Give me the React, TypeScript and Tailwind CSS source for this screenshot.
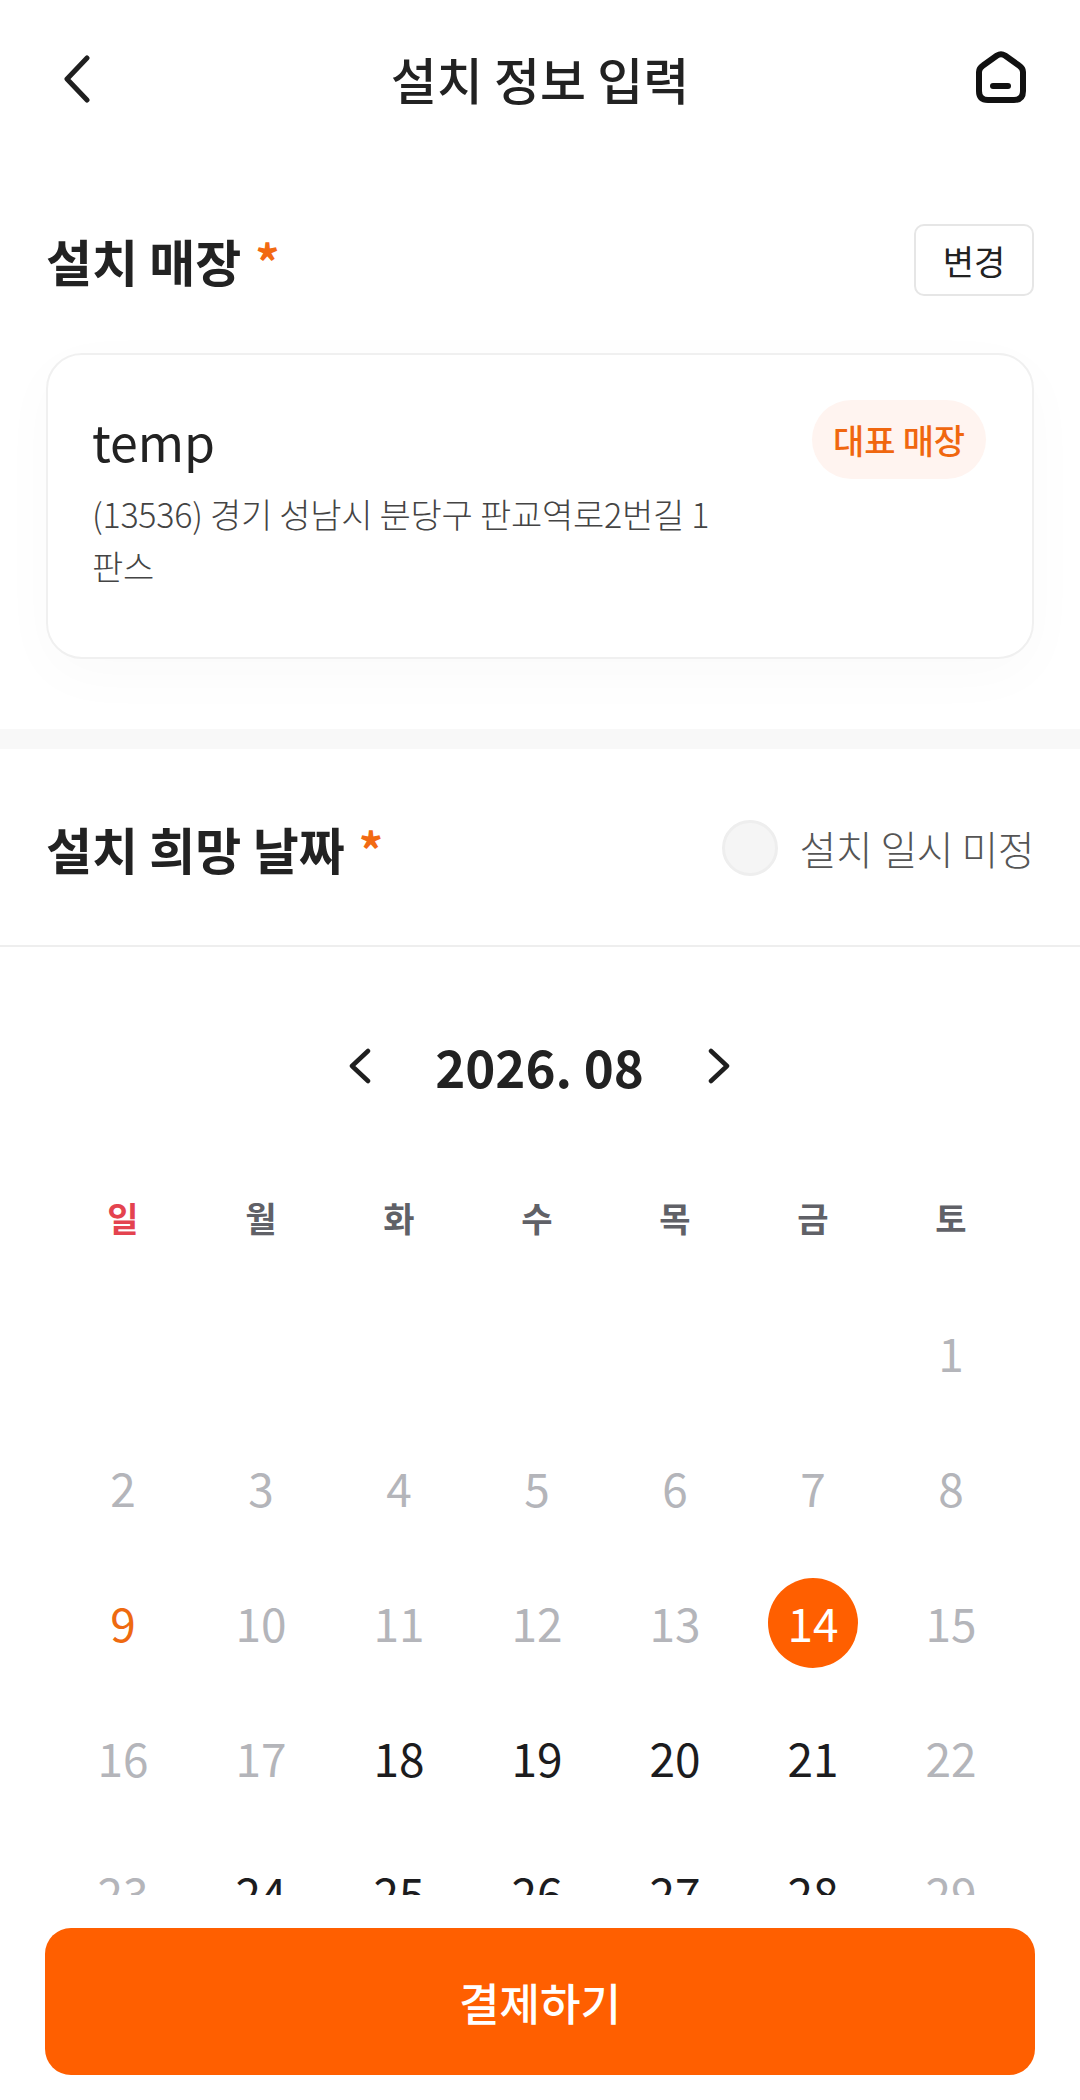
const font = "font-['Noto_Sans_CJK_KR','Noto_Sans',sans-serif]";

const weekdays = ['일', '월', '화', '수', '목', '금', '토'];

// blank cells first, then the days of August 2026
const days: (number | null)[] = [
  null, null, null, null, null, null, 1,
  2, 3, 4, 5, 6, 7, 8,
  9, 10, 11, 12, 13, 14, 15,
  16, 17, 18, 19, 20, 21, 22,
  23, 24, 25, 26, 27, 28, 29,
];

const enabled = [18, 19, 20, 21, 24, 25, 26, 27, 28];

function BackIcon() {
  return (
    <svg viewBox="0 0 26 48" width="26" height="48" fill="none">
      <path d="M23 3 L3 24 L23 45" stroke="#1f1f1f" strokeWidth="5" strokeLinecap="round" strokeLinejoin="round" />
    </svg>
  );
}

function MonthArrow({ dir }: { dir: 'left' | 'right' }) {
  return (
    <svg viewBox="0 0 22 36" width="22" height="36" fill="none">
      <path
        d={dir === 'left' ? 'M19 3 L3 18 L19 33' : 'M3 3 L19 18 L3 33'}
        stroke="#1f1f1f"
        strokeWidth="4.5"
        strokeLinecap="round"
        strokeLinejoin="round"
      />
    </svg>
  );
}

function HomeIcon() {
  return (
    <svg viewBox="0 0 50 52" width="50" height="52" fill="none">
      <path
        d="M7 14.5 L21 4.5 Q25 2 29 4.5 L43 14.5 Q47 17.2 47 21 V40 Q47 49 38 49 H12 Q3 49 3 40 V21 Q3 17.2 7 14.5 Z"
        stroke="#111111"
        strokeWidth="6"
        strokeLinejoin="round"
      />
      <path d="M17 35 H32" stroke="#111111" strokeWidth="6" strokeLinecap="round" />
    </svg>
  );
}

function SectionTitle({ children }: { children: string }) {
  return (
    <h2 className="flex items-start text-[50px] font-bold leading-[64px] text-[#222222]">
      {children}
      <span className="ml-[14px] mt-[7px] text-[48px] leading-[50px] text-[#f26a12]">*</span>
    </h2>
  );
}

function DayCell({ day }: { day: number | null }) {
  if (day === null) return <div className="h-[135px]" />;
  let color = 'text-[#b4b5ba]';
  if (enabled.includes(day)) color = 'text-[#1c1c1e]';
  if (day === 9) color = 'text-[#ee6a10]';
  return (
    <div className={`flex h-[135px] items-center justify-center text-[46px] ${color}`}>
      {day === 14 ? (
        <span className="flex h-[90px] w-[90px] items-center justify-center rounded-full bg-[#ff5f00] text-white">
          {day}
        </span>
      ) : (
        day
      )}
    </div>
  );
}

export default function App() {
  return (
    <div className={`flex h-[2100px] w-[1080px] flex-col overflow-hidden bg-white ${font}`}>
      <main className="h-[1895px] overflow-hidden">
        <header className="flex h-[158px] items-center justify-between px-[46px]">
          <div className="w-[60px] pl-[18px]">
            <BackIcon />
          </div>
          <h1 className="pb-[2px] text-[50px] font-medium text-[#222222]">설치 정보 입력</h1>
          <div className="flex w-[60px] justify-end pb-[4px] pr-[8px]">
            <HomeIcon />
          </div>
        </header>

        <section className="h-[571px] px-[46px] pt-[66px]">
          <div className="flex items-center justify-between">
            <SectionTitle>설치 매장</SectionTitle>
            <button className="flex h-[72px] w-[120px] items-center justify-center rounded-[10px] border-2 border-[#e6e6e6] text-[34px] text-[#222222]">
              변경
            </button>
          </div>
          <div className="mt-[57px] flex h-[306px] justify-between rounded-[36px] border-2 border-[#f0f0f0] bg-white pl-[44px] pr-[46px] pt-[45px] shadow-[0_16px_60px_rgba(0,0,0,0.025)]">
            <div className="w-[640px]">
              <p className="mt-[8px] text-[50px] leading-[64px] text-[#222222]">temp</p>
              <p className="mt-[16px] text-[34px] font-light leading-[52px] tracking-[-0.25px] text-[#444444]">
                (13536) 경기 성남시 분당구 판교역로2번길 1 판스
              </p>
            </div>
            <span className="flex h-[79px] w-[174px] items-center justify-center rounded-[40px] bg-[#fff4f0] text-[34px] font-medium tracking-[-0.2px] text-[#f0670f]">
              대표 매장
            </span>
          </div>
        </section>

        <div className="h-[20px] bg-[#f8f8f8]" />

        <section className="flex h-[198px] items-center justify-between border-b-2 border-[#eeeeee] px-[46px] pt-[2px]">
          <SectionTitle>설치 희망 날짜</SectionTitle>
          <label className="flex items-center gap-[22px] text-[40px] font-light tracking-[-0.5px] text-[#555555]">
            <span className="h-[56px] w-[56px] rounded-full border-[3px] border-[#eeeeee] bg-[#f5f5f5]" />
            설치 일시 미정
          </label>
        </section>

        <section className="pl-[54px] pr-[60px]">
          <div className="flex h-[238px] items-center justify-center gap-[64px] pl-[5px]">
            <MonthArrow dir="left" />
            <span className="text-[51px] font-bold leading-none text-[#222222]">2026. 08</span>
            <MonthArrow dir="right" />
          </div>
          <div className="grid grid-cols-7">
            {weekdays.map((name, i) => (
              <div
                key={name}
                className={`flex h-[64px] items-center justify-center text-[34px] font-bold ${
                  i === 0 ? 'text-[#e4434f]' : 'text-[#606167]'
                }`}
              >
                {name}
              </div>
            ))}
          </div>
          <div className="mt-[36px] grid grid-cols-7">
            {days.map((day, i) => (
              <DayCell key={i} day={day} />
            ))}
          </div>
        </section>
      </main>

      <footer className="px-[45px] pt-[33px]">
        <button className="flex h-[147px] w-full items-center justify-center rounded-[26px] bg-[#ff5f00] text-[44px] font-medium text-white">
          결제하기
        </button>
      </footer>
    </div>
  );
}
